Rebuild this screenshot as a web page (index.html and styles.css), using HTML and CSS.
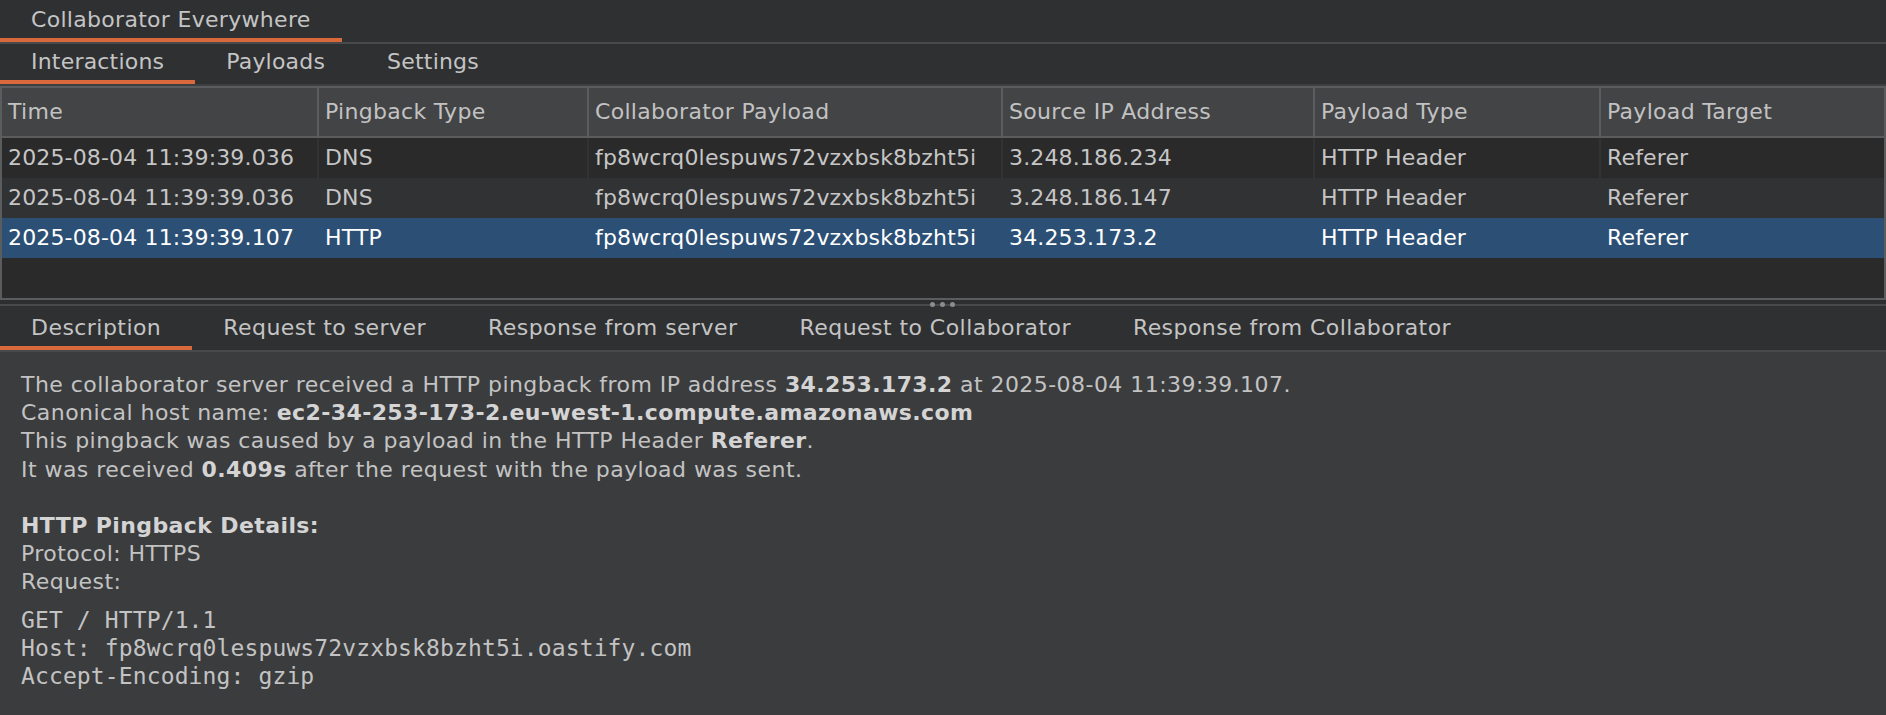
FILE: index.html
```html
<!DOCTYPE html>
<html>
<head>
<meta charset="utf-8">
<link rel="stylesheet" href="styles.css">
</head>
<body>
<div class="app">
  <div class="tabbar tabbar-top">
    <div class="tab tab-top active">Collaborator Everywhere</div>
  </div>
  <div class="tabbar tabbar-sub">
    <div class="tab tab-sub active">Interactions</div>
    <div class="tab tab-sub">Payloads</div>
    <div class="tab tab-sub">Settings</div>
  </div>
  <div class="table">
    <div class="row head">
      <div class="cell">Time</div>
      <div class="cell">Pingback Type</div>
      <div class="cell">Collaborator Payload</div>
      <div class="cell">Source IP Address</div>
      <div class="cell">Payload Type</div>
      <div class="cell">Payload Target</div>
    </div>
    <div class="row odd">
      <div class="cell">2025-08-04 11:39:39.036</div>
      <div class="cell">DNS</div>
      <div class="cell">fp8wcrq0lespuws72vzxbsk8bzht5i</div>
      <div class="cell">3.248.186.234</div>
      <div class="cell">HTTP Header</div>
      <div class="cell">Referer</div>
    </div>
    <div class="row even">
      <div class="cell">2025-08-04 11:39:39.036</div>
      <div class="cell">DNS</div>
      <div class="cell">fp8wcrq0lespuws72vzxbsk8bzht5i</div>
      <div class="cell">3.248.186.147</div>
      <div class="cell">HTTP Header</div>
      <div class="cell">Referer</div>
    </div>
    <div class="row selected">
      <div class="cell">2025-08-04 11:39:39.107</div>
      <div class="cell">HTTP</div>
      <div class="cell">fp8wcrq0lespuws72vzxbsk8bzht5i</div>
      <div class="cell">34.253.173.2</div>
      <div class="cell">HTTP Header</div>
      <div class="cell">Referer</div>
    </div>
    <div class="filler"></div>
  </div>
  <div class="splitter">
    <div class="grip"><span class="dot"></span><span class="dot"></span><span class="dot"></span></div>
  </div>
  <div class="tabbar tabbar-detail">
    <div class="tab tab-detail active">Description</div>
    <div class="tab tab-detail">Request to server</div>
    <div class="tab tab-detail">Response from server</div>
    <div class="tab tab-detail">Request to Collaborator</div>
    <div class="tab tab-detail">Response from Collaborator</div>
  </div>
  <div class="content">
    <div class="line">The collaborator server received a HTTP pingback from IP address <b>34.253.173.2</b> at 2025-08-04 11:39:39.107.</div>
    <div class="line">Canonical host name: <b>ec2-34-253-173-2.eu-west-1.compute.amazonaws.com</b></div>
    <div class="line">This pingback was caused by a payload in the HTTP Header <b>Referer</b>.</div>
    <div class="line">It was received <b>0.409s</b> after the request with the payload was sent.</div>
    <div class="line blank"></div>
    <div class="line"><b>HTTP Pingback Details:</b></div>
    <div class="line">Protocol: HTTPS</div>
    <div class="line">Request:</div>
    <pre class="request">GET / HTTP/1.1
Host: fp8wcrq0lespuws72vzxbsk8bzht5i.oastify.com
Accept-Encoding: gzip</pre>
  </div>
</div>
</body>
</html>
```

FILE: styles.css
```css
* {
  box-sizing: border-box;
}

html, body {
  margin: 0;
  padding: 0;
  height: 100%;
}

body {
  background: #2f3032;
  color: #c6c6c6;
  font-family: "DejaVu Sans", "Liberation Sans", sans-serif;
  font-size: 22px;
  overflow: hidden;
}

.app {
  display: flex;
  flex-direction: column;
  height: 100vh;
}

.tabbar {
  display: flex;
  background: #2f3032;
  border-bottom: 2px solid #48494b;
  flex: none;
}

.tabbar-sub {
  border-bottom-color: #3e3f41;
}

.tab {
  padding: 0 31px;
  border-bottom: 4px solid transparent;
  color: #c4c4c4;
  white-space: nowrap;
}

.tab.active {
  border-bottom-color: #d9693a;
}

.tab-top {
  padding-top: 2px;
  line-height: 36px;
  letter-spacing: 0.3px;
}

.tab-sub {
  line-height: 36px;
  letter-spacing: 0.2px;
}

.tab-detail {
  padding-top: 4px;
  line-height: 36px;
  letter-spacing: 0.45px;
}

.table {
  border: 2px solid #5b5c5e;
  background: #2a2a2a;
  flex: none;
}

.row {
  display: grid;
  grid-template-columns: 317px 270px 414px 312px 286px 1fr;
  height: 40px;
  line-height: 40px;
  letter-spacing: 0.15px;
}

.cell {
  padding-left: 6px;
  white-space: nowrap;
  overflow: hidden;
  border-right: 2px solid transparent;
}

.cell:last-child {
  border-right: none;
}

.row.head {
  height: 50px;
  line-height: 48px;
  background: #434446;
  border-bottom: 2px solid #5b5c5e;
  color: #c2c2c2;
  letter-spacing: 0.3px;
}

.row.head .cell {
  border-right-color: #5b5c5e;
}

.row.odd {
  background: #2a2a2a;
}

.row.odd .cell {
  border-right-color: #313234;
}

.row.even {
  background: #313234;
}

.row.selected {
  background: #2c5075;
  color: #ffffff;
}

.filler {
  height: 40px;
  background: #2a2a2a;
}

.splitter {
  position: relative;
  height: 6px;
  background: #2d2e30;
  border-bottom: 2px solid #48494b;
  flex: none;
}

.grip {
  position: absolute;
  left: calc(50% - 13px);
  top: 2px;
  display: flex;
  gap: 5px;
}

.dot {
  width: 5px;
  height: 5px;
  border-radius: 50%;
  background: #8d8d8d;
}

.content {
  flex: 1;
  background: #3b3c3e;
  padding: 19px 21px;
  color: #c3c3c3;
}

.line {
  line-height: 28.2px;
  white-space: nowrap;
  letter-spacing: 0.45px;
}

.line.blank {
  height: 28.2px;
}

.line b {
  color: #d4d4d4;
  font-weight: bold;
  letter-spacing: 0.4px;
}

.request {
  margin: 9px 0 0 0;
  font-family: "DejaVu Sans Mono", "Liberation Mono", monospace;
  font-size: 23px;
  line-height: 28.3px;
  letter-spacing: 0.12px;
  color: #c3c3c3;
}
```
